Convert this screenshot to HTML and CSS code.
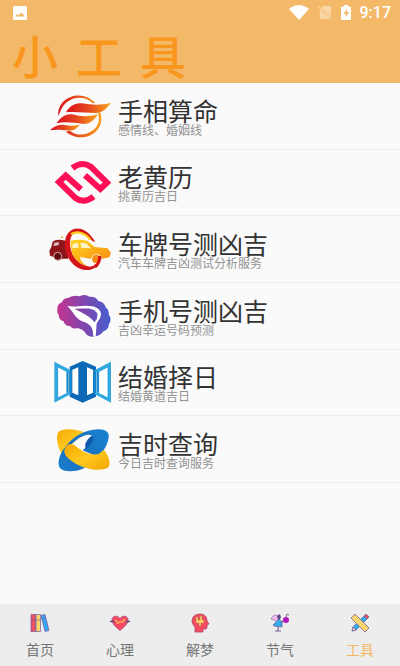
FILE: index.html
```html
<!DOCTYPE html>
<html lang="zh-CN">
<head>
<meta charset="utf-8">
<meta name="viewport" content="width=device-width, initial-scale=1">
<title>小工具</title>
<link rel="stylesheet" href="styles.css">
</head>
<body>
<header class="header">
  <div class="status">
    <svg class="status-photo" viewBox="0 0 14 14" aria-hidden="true"><rect width="14" height="14" rx="1.5" fill="#fff"/><path d="M2 10.5 4 8l1.500 1.200L8.500 6.500 12 10.500z" fill="#f4b968"/></svg>
    <div class="status-right">
      <svg class="status-wifi" viewBox="0 0 20 15" aria-hidden="true"><path d="M0 4Q10-4 20 4L10 15z" fill="#fff"/></svg>
      <svg class="status-sim" viewBox="0 0 14 15" aria-hidden="true"><path d="M5 1h8v11L3.500 2.500zM1.800 4.500 11.500 14H2z" fill="#f8d6a6"/><path d="M.5 1.500 13 14" stroke="#f8d6a6" stroke-width="1.300"/></svg>
      <svg class="status-battery" viewBox="0 0 10 15" aria-hidden="true"><path d="M3 0h4v1.500h2q1 0 1 1V14q0 1-1 1H1q-1 0-1-1V2.500q0-1 1-1h2z" fill="#fff"/><path d="M6 3.500 2.500 9H4.600v3.500L8 7H5.800z" fill="#f4b968"/></svg>
      <time class="clock">9:17</time>
    </div>
  </div>
  <h1 class="title"><span>小</span><span>工</span><span>具</span></h1>
</header>

<main class="main">
  <ul class="tools">
    <li class="tool"><a class="tool-link" href="#palm">
      <svg class="logo" viewBox="24 21 192 150" aria-hidden="true">
        <defs><linearGradient id="fire" x1="0" x2="1"><stop offset="0" stop-color="#d80f1c"/><stop offset=".5" stop-color="#e6481f"/><stop offset="1" stop-color="#f9a51d"/></linearGradient>
        <linearGradient id="ring" gradientUnits="userSpaceOnUse" x1="54" y1="0" x2="188" y2="0"><stop offset="0" stop-color="#d80f1c"/><stop offset="1" stop-color="#f9a51d"/></linearGradient></defs>
        <path d="M55 96C50 51 103 18 150 44L166 56 158 58C128 28 77 41 62 80zM180 84C196 125 163 160 124 160 103 160 87 151 78 143L89 140C128 171 191 135 174 89z" fill="url(#ring)"/>
        <path d="M78 85C91 64 104 58 125 58 157 62 180 65 213 56 198 76 188 85 167 87 137 87 110 82 78 85z" fill="url(#fire)"/>
        <path d="M49 118C65 97 77 89 97 91 123 99 149 98 174 91 160 113 148 120 130 120 100 116 75 112 49 118z" fill="url(#fire)"/>
        <path d="M30 139C44 126 58 121 74 123 92 127 103 124 119 122 107 139 96 141 80 139 60 137 46 136 30 139z" fill="url(#fire)"/>
      </svg>
      <span class="tool-text"><strong class="tool-name">手相算命</strong><span class="tool-desc">感情线、婚姻线</span></span>
    </a></li>
    <li class="tool"><a class="tool-link" href="#almanac">
      <svg class="logo" viewBox="24 25 192 150" aria-hidden="true">
        <g transform="translate(24 24)" fill="none" stroke="#ff0f55" stroke-width="18">
          <path d="M73 34Q102 12 128 30L177 78 157 97 111 56"/>
          <path d="M137 120Q108 142 82 124L33 76 53 57 99 98"/>
        </g>
      </svg>
      <span class="tool-text"><strong class="tool-name">老黄历</strong><span class="tool-desc">挑黄历吉日</span></span>
    </a></li>
    <li class="tool"><a class="tool-link" href="#plate">
      <svg class="logo" viewBox="24 25 192 150" aria-hidden="true">
        <defs><linearGradient id="car" x1="0" x2="1" y2="1"><stop offset="0" stop-color="#ffd51d"/><stop offset="1" stop-color="#f58612"/></linearGradient></defs>
        <path d="M28 105 34 94 38 78Q45 71 60 72L84 76V129H66Q61 136 51 134 43 132 41 124L30 120z" fill="#8e1519"/>
        <path d="M43 81 56 79 57 88 40 92z" fill="#d9b9ba"/><circle cx="53" cy="122" r="12" fill="#65090e" stroke="#fff" stroke-width="2"/>
        <path d="M61 65l8-3v6z" fill="#f6a01c"/>
        <path fill-rule="evenodd" d="M77 67C90 29 135 26 166 79L157 76C129 38 97 43 91 71 84 111 114 152 151 153 164 151 173 142 179 122L186 126C178 153 157 167 130 162 94 155 66 111 77 67z" fill="#d4141d"/>
        <path d="M93 56C112 44 135 52 151 72" fill="none" stroke="#ffcb19" stroke-width="7"/>
        <path d="M91 76Q117 69 143 76L164 94 203 98 213 111 208 125 188 129Q180 113 166 117 154 121 154 130L120 124Q122 144 148 153 111 147 96 114z" fill="url(#car)"/>
        <path d="M99 84l15-3 2 16H96zM121 81l18 2 14 15-29-1z" fill="#fff3c4"/>
        <circle cx="169" cy="130" r="14" fill="#f48b14" stroke="#fff" stroke-width="2"/><path d="M179 121Q179 144 165 154" fill="none" stroke="#d4141d" stroke-width="9"/>
      </svg>
      <span class="tool-text"><strong class="tool-name">车牌号测凶吉</strong><span class="tool-desc">汽车车牌吉凶测试分析服务</span></span>
    </a></li>
    <li class="tool"><a class="tool-link" href="#phone">
      <svg class="logo" viewBox="24 27 192 150" aria-hidden="true">
        <defs><linearGradient id="brain" x1="0" x2="1"><stop offset="0" stop-color="#c43591"/><stop offset=".5" stop-color="#8146ad"/><stop offset="1" stop-color="#465ed0"/></linearGradient></defs>
        <path d="M52 83Q51 66 66 61 69 48 86 47 101 38 119 43 134 35 149 44 168 43 175 57 193 60 197 76 208 84 206 97 217 112 207 126 206 143 190 148 182 163 160 164 143 165 137 154 128 141 112 138 98 143 90 132 73 132 71 118 56 114 56 98 50 92 52 83z" fill="url(#brain)"/>
        <path fill-rule="evenodd" d="M82 72C105 77 128 67 157 73 190 81 188 103 170 124L167 164H160C159 136 153 130 135 121 103 111 103 91 82 72zM103 80C126 92 151 103 164 121Q182 98 163 85C148 76 126 81 103 80z" fill="#fff"/>
      </svg>
      <span class="tool-text"><strong class="tool-name">手机号测凶吉</strong><span class="tool-desc">吉凶幸运号码预测</span></span>
    </a></li>
    <li class="tool"><a class="tool-link" href="#wedding">
      <svg class="logo" viewBox="24 29 192 150" aria-hidden="true">
        <path d="M89 58 128 41 168 58V148L128 166 89 148z" fill="#0b69b5"/>
        <path d="M97 67l18-7v84l-18-8zM141 60l18 7v69l-18 8z" fill="#fff"/>
        <path fill-rule="evenodd" d="M43 43 93 69V140L43 166zM55 61V149L79 137V74zM213 43 163 69V140L213 166zM202 61V149L178 137V74z" fill="#31a9df"/>
        <path d="M55 61 79 74V137L55 149zM202 61 178 74V137L202 149z" fill="#fff"/>
        <path d="M80 76l16-7v70l-16-4zM176 76l-16-7v70l16-4z" fill="#1685cc"/><path d="M86 75v62M170 75v62" stroke="#b7def3" stroke-width="2"/>
      </svg>
      <span class="tool-text"><strong class="tool-name">结婚择日</strong><span class="tool-desc">结婚黄道吉日</span></span>
    </a></li>
    <li class="tool"><a class="tool-link" href="#hour">
      <svg class="logo" viewBox="24 26 192 150" aria-hidden="true">
        <defs><linearGradient id="gold" x1="0" x2="1" y2="1"><stop offset="0" stop-color="#f5a800"/><stop offset=".5" stop-color="#ffc91f"/><stop offset="1" stop-color="#f4a400"/></linearGradient>
        <linearGradient id="blue" x1="1" x2="0" y2="1"><stop offset="0" stop-color="#1a83d0"/><stop offset=".6" stop-color="#1670bf"/><stop offset="1" stop-color="#1c7ecb"/></linearGradient></defs>
        <g transform="translate(24 29)">
          <path d="M31 22C41 8 84 10 116 24L84 46 58 72 42 90C27 62 23 36 31 22z" fill="url(#gold)"/>
          <path d="M35 128C20 98 62 38 110 21 150 6 187 10 182 38 178 62 164 82 150 96L104 76C124 60 140 42 132 32 118 22 90 38 70 58 52 78 54 92 66 100L112 128C82 142 46 142 35 128z" fill="url(#blue)"/>
          <path d="M112 56Q120 38 132 32 142 38 130 56L112 74z" fill="#105aae"/>
          <path d="M84 56Q100 38 126 35 114 42 108 52 96 51 84 60z" fill="#fafafa"/>
          <path d="M50 72C56 54 70 54 82 62 104 82 132 92 152 87L168 74C186 98 190 122 177 130 150 141 96 130 66 104 54 94 46 84 50 72z" fill="url(#gold)"/>
        </g>
      </svg>
      <span class="tool-text"><strong class="tool-name">吉时查询</strong><span class="tool-desc">今日吉时查询服务</span></span>
    </a></li>
  </ul>
</main>

<nav class="tabs" aria-label="主导航">
  <a class="tab" href="#home">
    <svg class="tab-icon" viewBox="0 0 20 20" aria-hidden="true"><g stroke="#77559b" stroke-width=".7"><path d="M1 1.500h4.500v17H1z" fill="#f05261"/><path d="M6 1.500h4.500v17H6z" fill="#fbd56d"/><path d="m11 2.500 4-1 4 16-4 1z" fill="#35a7f2"/><path d="M1 7h9.500m1-1 4-1"/></g></svg>
    <span>首页</span></a>
  <a class="tab" href="#mind">
    <svg class="tab-icon" viewBox="0 0 20 20" aria-hidden="true"><path d="M10 17.500C5 13.500 2 10.500 2 7 2 2.500 7.500 2 10 5.500 12.500 2 18 2.500 18 7c0 3.500-3 6.500-8 10.500z" fill="#fb4960" stroke="#a44b7d" stroke-width=".8"/><path d="M0 8.500h5M15 8.500h5" fill="none" stroke="#634784" stroke-width="1.300"/><path d="M5 8.500 6 7l2 4 2-3 2 2 2-4 1 2.500" fill="none" stroke="#ffce57"/></svg>
    <span>心理</span></a>
  <a class="tab" href="#dream">
    <svg class="tab-icon" viewBox="0 0 20 20" aria-hidden="true"><path d="M5 19v-5C0 10 1 1 10 1c5 0 7 3 7 7l2 3-2 1v3q0 1-2 1h-2v3z" fill="#f64a5f" stroke="#ad4872" stroke-width=".8"/><path d="M6 4h2v3h2V3h2v4h2v3h-3v3H9v-3H6z" fill="#ffd465" stroke="#a66b62" stroke-width=".5"/></svg>
    <span>解梦</span></a>
  <a class="tab" href="#season">
    <svg class="tab-icon" viewBox="0 0 20 20" aria-hidden="true"><path d="M1 6Q4 0 8 3l2 4-4 1z" fill="#eebcf1" stroke="#956fac" stroke-width=".7"/><path d="m7 3 3-2 1 4-3 2z" fill="#594887"/><path d="M3 12 9 6l3 3v5l-8-1z" fill="#32afe9" stroke="#654f99" stroke-width=".7"/><path d="M8 14v4M5 18h6m0-8 4-4" stroke="#79619d" stroke-width="1.200"/><circle cx="16" cy="7" r="3" fill="#b318bb"/><path d="m16 4 1-3 2 1" fill="none" stroke="#806e8c"/></svg>
    <span>节气</span></a>
  <a class="tab tab-active" href="#tools" aria-current="page">
    <svg class="tab-icon" viewBox="0 0 20 20" aria-hidden="true"><g stroke="#78609a" stroke-width=".8"><path d="M2 18 3 14 14 3l3 3L6 17z" fill="#35aef1"/><path d="m14 3 2-2 3 3-2 2z" fill="#f04f68"/><path d="m2 18 1-4 3 3z" fill="#f8ddd0"/><path d="m1 5 4-4 14 14-4 4z" fill="#fbd66e"/></g></svg>
    <span>工具</span></a>
</nav>
</body>
</html>
```
FILE: styles.css
```css
* {
  box-sizing: border-box;
}

body {
  display: flex;
  flex-direction: column;
  min-height: 100vh;
  margin: 0;
  background: #fafafa;
  color: #333;
  font-family: "Noto Sans CJK SC", sans-serif;
}

a {
  color: inherit;
  text-decoration: none;
}

svg {
  display: block;
  flex: none;
}

.header {
  background: #f4b968;
}

.status {
  display: flex;
  align-items: center;
  justify-content: space-between;
  height: 25px;
  padding: 0 9px 0 13px;
}

.status-right {
  display: flex;
  align-items: center;
  gap: 9px;
}

.status-photo {
  width: 14px;
  height: 14px;
}

.status-wifi {
  width: 20px;
  height: 15px;
}

.status-sim {
  width: 14px;
  height: 15px;
}

.status-battery {
  width: 10px;
  height: 15px;
}

.clock {
  color: #fff;
  font: 500 16px/24px Roboto, sans-serif;
}

.title {
  display: flex;
  gap: 18px;
  margin: 0;
  padding-left: 12px;
  color: #f9961e;
  font-size: 46px;
  font-weight: 500;
  line-height: 58px;
}

.main {
  flex: 1;
}

.tools {
  display: grid;
  grid-auto-rows: 1fr;
  min-height: 400px;
  margin: 0;
  padding: 0;
  list-style: none;
}

.tool {
  display: flex;
  border-bottom: 1px solid #ececec;
}

.tool-link {
  display: flex;
  flex: 1;
  align-items: center;
  gap: 6px;
  padding-left: 48px;
}

.logo {
  width: 64px;
  height: 50px;
}

.tool-text {
  display: flex;
  flex-direction: column;
  padding-top: 2px;
}

.tool-name {
  font-size: 25px;
  font-weight: 400;
  line-height: 26px;
}

.tool-desc {
  color: #929292;
  font-size: 12px;
  line-height: 14px;
}

.tabs {
  display: flex;
  background: #ededed;
}

.tab {
  display: flex;
  flex: 1;
  flex-direction: column;
  align-items: center;
  gap: 6px;
  padding: 9px 0 7px;
  color: #757575;
  font-size: 14px;
  line-height: 20px;
}

.tab-active {
  color: #f4b968;
}

.tab-icon {
  width: 20px;
  height: 20px;
}
```
